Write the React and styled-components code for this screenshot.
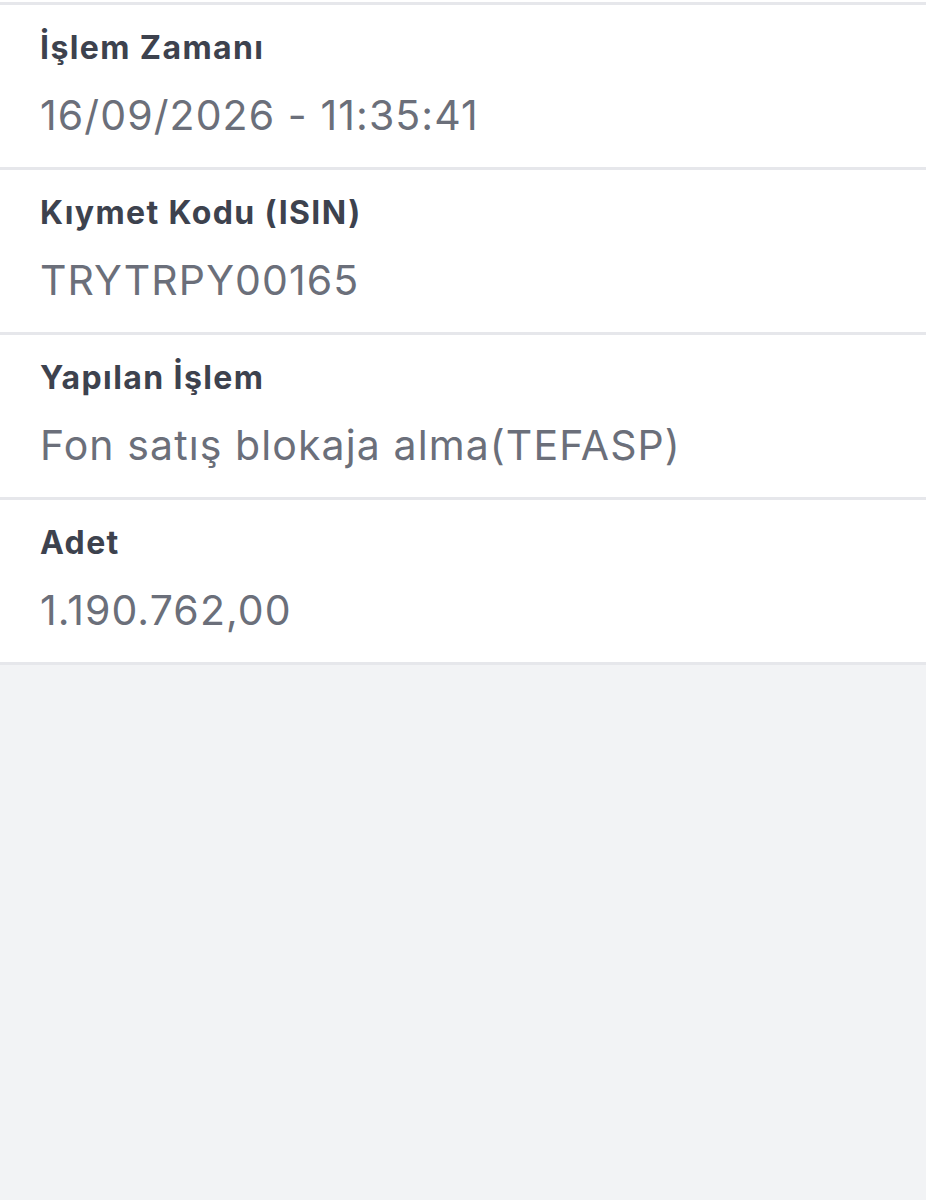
import styled, { createGlobalStyle } from 'styled-components';

const GlobalStyle = createGlobalStyle`
  html, body {
    margin: 0;
    padding: 0;
    background: #f2f3f5;
  }
  #root {
    min-height: 100vh;
  }
`;

const Page = styled.div`
  min-height: 100vh;
  background: #f2f3f5;
  font-family: Inter, 'Liberation Sans', sans-serif;
`;

const List = styled.div`
  display: flex;
  flex-direction: column;
  background: #fff;
  padding-top: 2px;
`;

const Row = styled.div`
  display: flex;
  flex-direction: column;
  gap: 25px;
  padding: 25px 40px 28px;
  background: #fff;
  border-top: ${({ $first }) => ($first ? '3px solid #e6e7eb' : 'none')};
  border-bottom: 3px solid #e6e7eb;
`;

const Label = styled.div`
  font-size: 32px;
  line-height: 36px;
  font-weight: 700;
  letter-spacing: 1.4px;
  color: #3d424e;
`;

const Value = styled.div`
  font-size: 41px;
  line-height: 48px;
  font-weight: 400;
  letter-spacing: 1.1px;
  color: #6b6f7a;
`;

const items = [
  { label: 'İşlem Zamanı', value: '16/09/2026 - 11:35:41' },
  { label: 'Kıymet Kodu (ISIN)', value: 'TRYTRPY00165' },
  { label: 'Yapılan İşlem', value: 'Fon satış blokaja alma(TEFASP)' },
  { label: 'Adet', value: '1.190.762,00' },
];

const App = () => (
  <Page>
    <GlobalStyle />
    <List>
      {items.map((item, i) => (
        <Row key={item.label} $first={i === 0}>
          <Label>{item.label}</Label>
          <Value>{item.value}</Value>
        </Row>
      ))}
    </List>
  </Page>
);

export default App;
